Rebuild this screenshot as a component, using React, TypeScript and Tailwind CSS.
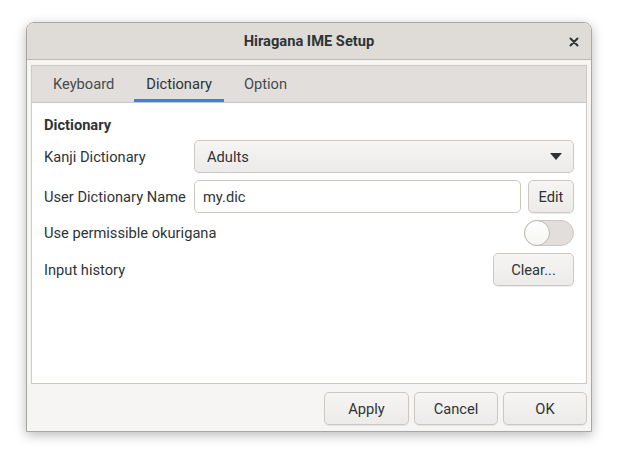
import { useState } from "react";

const font = { fontFamily: "Roboto, 'Noto Sans', sans-serif" };

function Btn({ label, className = "" }: { label: string; className?: string }) {
  return (
    <button
      type="button"
      className={`h-[33px] rounded-[5px] border border-[#cdc7c2] bg-gradient-to-b from-[#f6f5f4] to-[#edebe9] text-[14.67px] text-[#2e3436] shadow-[0_1px_0_rgba(0,0,0,0.07)] ${className}`}
    >
      {label}
    </button>
  );
}

function Row({ label, children }: { label: string; children: React.ReactNode }) {
  return (
    <div className="flex items-center">
      <div className="w-[150px] shrink-0 whitespace-nowrap text-[14.67px] text-[#2e3436]">{label}</div>
      <div className="flex flex-1 justify-end gap-[7px]">{children}</div>
    </div>
  );
}

export default function App() {
  const [tab, setTab] = useState("Dictionary");
  const [okuri, setOkuri] = useState(false);

  return (
    <div className="h-[460px] w-[618px] bg-white pl-[26px] pt-[22px]" style={font}>
      <div className="flex h-[410px] w-[566px] flex-col overflow-hidden rounded-t-[8px] border border-[#a9a7a4] shadow-[0_3px_12px_rgba(0,0,0,0.28)]">
        {/* Title bar */}
        <div className="relative flex h-[37px] shrink-0 items-center justify-center border-b border-[#bfb8b1] bg-[#dfdcd8]">
          <span className="text-[14.67px] font-bold text-[#2e3436]">Hiragana IME Setup</span>
          <svg className="absolute right-[12px] top-[14px]" width="10" height="10" viewBox="0 0 10 10">
            <path d="M1.5 1.5 L8.5 8.5 M8.5 1.5 L1.5 8.5" stroke="#2e3436" strokeWidth="2" strokeLinecap="round" />
          </svg>
        </div>

        {/* Body */}
        <div className="flex flex-1 flex-col bg-[#f6f5f4] px-[4px] pb-[5px] pt-[5px]">
          <div className="flex h-[319px] flex-col border border-[#cdc7c2]">
            {/* Tabs */}
            <div className="flex h-[37px] shrink-0 items-stretch gap-[8px] border-b border-[#cdc7c2] bg-[#e1dedb] pl-[9px]">
              {["Keyboard", "Dictionary", "Option"].map((t) => (
                <button
                  key={t}
                  type="button"
                  onClick={() => setTab(t)}
                  className={`flex items-center border-b-[3px] px-[12px] pt-[3px] text-[14.67px] ${
                    tab === t ? "border-[#3584e4] text-[#2e3436]" : "border-transparent text-[#464b4d]"
                  }`}
                >
                  {t}
                </button>
              ))}
            </div>

            {/* Content */}
            <div className="flex flex-1 flex-col gap-[7px] bg-white px-[12px] pt-[12px]">
              <div className="mb-[-2px] text-[14.67px] font-bold leading-[20px] text-[#2e3436]">Dictionary</div>
              <Row label="Kanji Dictionary">
                <div className="flex h-[33px] w-[380px] items-center justify-between rounded-[5px] border border-[#cdc7c2] bg-gradient-to-b from-[#f6f5f4] to-[#edebe9] pl-[12px] pr-[11px] text-[14.67px] text-[#2e3436]">
                  <span>Adults</span>
                  <svg width="12" height="7" viewBox="0 0 12 7">
                    <path d="M0 0 H12 L6 7 Z" fill="#2e3436" />
                  </svg>
                </div>
              </Row>
              <Row label="User Dictionary Name">
                <div className="flex h-[33px] w-[327px] items-center rounded-[5px] border border-[#cdc7c2] bg-white pl-[8px] text-[14.67px] text-[#2e3436]">
                  my.dic
                </div>
                <Btn label="Edit" className="w-[46px]" />
              </Row>
              <Row label="Use permissible okurigana">
                <button
                  type="button"
                  onClick={() => setOkuri(!okuri)}
                  className="relative h-[26px] w-[50px] rounded-full border border-[#cdc7c2] bg-[#e1dedb]"
                >
                  <span
                    className={`absolute top-[-1px] h-[26px] w-[26px] rounded-full border border-[#bfb8b1] bg-gradient-to-b from-[#ffffff] to-[#f6f5f4] ${
                      okuri ? "right-[-1px]" : "left-[-1px]"
                    }`}
                  />
                </button>
              </Row>
              <Row label="Input history">
                <Btn label="Clear..." className="w-[81px]" />
              </Row>
            </div>
          </div>

          {/* Dialog buttons */}
          <div className="mt-[8px] flex justify-end gap-[5px]">
            <Btn label="Apply" className="w-[85px]" />
            <Btn label="Cancel" className="w-[84px]" />
            <Btn label="OK" className="w-[84px]" />
          </div>
        </div>
      </div>
    </div>
  );
}
